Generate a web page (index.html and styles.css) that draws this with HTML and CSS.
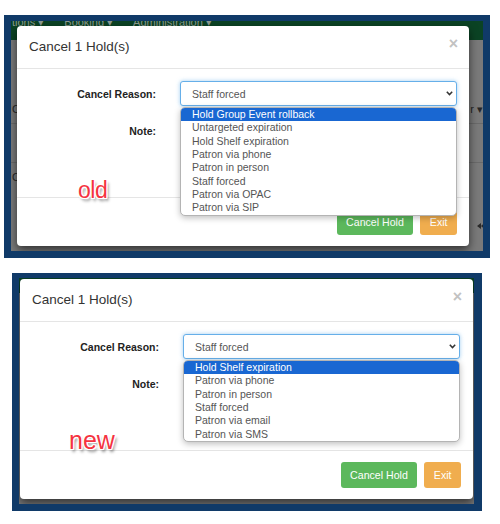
FILE: index.html
```html
<!DOCTYPE html>
<html lang="en">
<head>
<meta charset="utf-8">
<title>Cancel Hold – old vs new</title>
<link rel="stylesheet" href="styles.css">
</head>
<body>
  <div class="shot shot-old">
    <div class="screen">
      <div class="page">
        <div class="nav"><span>tions ▾</span><span>Booking ▾</span><span>Administration ▾</span></div>
        <div class="pg-row row1"><span>C</span><span>r ▾</span></div>
        <div class="pg-row row2"></div>
        <div class="pg-row row3"><span>C</span></div>
        <div class="pg-row row4">
          <svg class="pg-arrow" width="7" height="6" viewBox="0 0 7 6"><path d="M0 3 L4 0 V6 Z M4 3 L7 0.5 V5.5 Z" fill="#2a2a2a"/></svg>
        </div>
      </div>
      <div class="modal">
        <div class="modal-header">
          <h4 class="modal-title">Cancel 1 Hold(s)</h4>
          <button class="close" aria-label="Close">×</button>
        </div>
        <div class="modal-body">
          <label class="lbl">Cancel Reason:</label>
          <div class="select-wrap">
            <div class="select"><span>Staff forced</span><svg class="chev" width="7" height="5" viewBox="0 0 7 5"><path d="M0.8 0.8 L3.5 3.6 L6.2 0.8" fill="none" stroke="#333" stroke-width="1.5"/></svg></div>
            <ul class="options">
              <li class="sel">Hold Group Event rollback</li>
              <li>Untargeted expiration</li>
              <li>Hold Shelf expiration</li>
              <li>Patron via phone</li>
              <li>Patron in person</li>
              <li>Staff forced</li>
              <li>Patron via OPAC</li>
              <li>Patron via SIP</li>
            </ul>
          </div>
          <label class="lbl note-lbl">Note:</label>
          <div class="note-area"></div>
        </div>
        <div class="modal-footer">
          <button class="btn btn-success">Cancel Hold</button>
          <button class="btn btn-warning">Exit</button>
        </div>
      </div>
      <div class="tag tag-old">old</div>
    </div>
  </div>

  <div class="shot shot-new">
    <div class="screen">
      <div class="page">
        <div class="nav nav-new"></div>
      </div>
      <div class="modal">
        <div class="modal-header">
          <h4 class="modal-title">Cancel 1 Hold(s)</h4>
          <button class="close" aria-label="Close">×</button>
        </div>
        <div class="modal-body">
          <label class="lbl">Cancel Reason:</label>
          <div class="select-wrap">
            <div class="select"><span>Staff forced</span><svg class="chev" width="7" height="5" viewBox="0 0 7 5"><path d="M0.8 0.8 L3.5 3.6 L6.2 0.8" fill="none" stroke="#333" stroke-width="1.5"/></svg></div>
            <ul class="options">
              <li class="sel">Hold Shelf expiration</li>
              <li>Patron via phone</li>
              <li>Patron in person</li>
              <li>Staff forced</li>
              <li>Patron via email</li>
              <li>Patron via SMS</li>
            </ul>
          </div>
          <label class="lbl note-lbl">Note:</label>
          <div class="note-area"></div>
        </div>
        <div class="modal-footer">
          <button class="btn btn-success">Cancel Hold</button>
          <button class="btn btn-warning">Exit</button>
        </div>
      </div>
      <div class="tag tag-new">new</div>
    </div>
  </div>
</body>
</html>
```
FILE: styles.css
```css
* { box-sizing: border-box; }

body {
  margin: 0;
  background: #fff;
  font-family: "Liberation Sans", Arial, sans-serif;
}

.shot {
  border-style: solid;
  border-color: #103a68;
}
.shot-old {
  margin: 15px 0 0 4px;
  width: 486px;
  height: 243px;
  border-width: 6px 7px 7px 7px;
}
.shot-new {
  margin: 15px 0 0 12px;
  width: 470px;
  height: 238px;
  border-width: 5px 8px 7px 7px;
}

.screen {
  position: relative;
  height: 100%;
  overflow: hidden;
  background: #7a7a7a;
}

/* dimmed page under the backdrop */
.nav {
  height: 19px;
  background: #0b4324;
  display: flex;
  gap: 20px;
  padding-left: 1px;
  overflow: hidden;
  color: #8d9b92;
  font-size: 11px;
  line-height: 11px;
}
.nav span { margin-top: -4px; white-space: nowrap; }
.nav-new { height: 15px; }

.pg-row {
  display: flex;
  justify-content: space-between;
  color: #262626;
  font-size: 11px;
  line-height: 12px;
  padding-left: 1px;
}
.row1 {
  margin-top: 57px;
  height: 27px;
  padding-top: 6px;
  border-bottom: 1px solid #6a6a6a;
}
.row2 {
  height: 39px;
  border-bottom: 1px solid #6a6a6a;
}
.row3 {
  height: 60px;
  padding-top: 8px;
}
.row4 {
  justify-content: flex-end;
  padding-right: 0;
  height: 10px;
}
.pg-arrow { margin-right: -1px; }

/* modal */
.modal {
  position: absolute;
  height: 220px;
  background: #fff;
  border-radius: 4px;
  box-shadow: 0 4px 10px rgba(0, 0, 0, 0.6);
  display: flex;
  flex-direction: column;
}
.shot-old .modal { left: 6px; top: 5px; width: 452px; }
.shot-new .modal { left: 1px; top: 1px; width: 453px; }

.modal-header {
  height: 43px;
  flex: none;
  border-bottom: 1px solid #e5e5e5;
  display: flex;
  align-items: center;
  justify-content: space-between;
  padding: 0 11px 0 12px;
}
.modal-title {
  margin: 0;
  font-size: 13.5px;
  font-weight: normal;
  line-height: 16px;
  color: #333;
}
.close {
  align-self: flex-start;
  margin-top: 10px;
  border: 0;
  background: none;
  padding: 0;
  font: bold 16px/16px "Liberation Sans", Arial, sans-serif;
  color: #c2c2c2;
}

.modal-body {
  height: 128px;
  flex: none;
  display: grid;
  grid-template-columns: 139px 277px;
  column-gap: 24px;
  row-gap: 19px;
  align-content: start;
  padding-top: 12px;
}
.lbl {
  font-weight: bold;
  font-size: 10.5px;
  line-height: 12px;
  color: #222;
  text-align: right;
  align-self: center;
}
.note-lbl { align-self: start; }

.select-wrap { position: relative; }
.select {
  height: 25px;
  border: 1px solid #66afe9;
  border-radius: 3px;
  box-shadow: 0 0 4px rgba(102, 175, 233, 0.6);
  background: #fff;
  display: flex;
  align-items: center;
  justify-content: space-between;
  padding: 0 3px 0 11px;
  font-size: 10.5px;
  color: #555;
}
.options {
  position: absolute;
  z-index: 2;
  left: 0;
  top: 26px;
  width: 277px;
  margin: 0;
  padding: 0;
  list-style: none;
  background: #fff;
  border: 1px solid #b4b4b4;
  border-radius: 5px;
  box-shadow: 0 2px 6px rgba(0, 0, 0, 0.25);
  overflow: hidden;
}
.options li {
  height: 13.33px;
  line-height: 13.33px;
  padding-left: 11px;
  font-size: 10.5px;
  color: #555;
  white-space: nowrap;
}
.options li.sel {
  background: #1967d2;
  color: #fff;
}
.note-area { height: 56px; }

.modal-footer {
  height: 49px;
  flex: none;
  border-top: 1px solid #e5e5e5;
  display: flex;
  justify-content: flex-end;
  align-items: flex-start;
  gap: 7px;
  padding: 11px 12px 0 0;
}
.btn {
  height: 26px;
  padding: 0 9.5px;
  border: 0;
  border-radius: 3px;
  color: #fff;
  font: 10.6px/26px "Liberation Sans", Arial, sans-serif;
}
.btn-success { background: #5cb85c; }
.btn-warning { background: #f0ad4e; }

/* annotation labels */
.tag {
  position: absolute;
  z-index: 3;
  color: #f5333f;
  text-shadow:
    1px 0 0 #fff, -1px 0 0 #fff, 0 1px 0 #fff, 0 -1px 0 #fff,
    1px 1px 0 #fff, -1px -1px 0 #fff, 1px -1px 0 #fff, -1px 1px 0 #fff,
    2px 3px 3px rgba(0, 0, 0, 0.45);
}
.tag-old {
  left: 67px;
  top: 158px;
  font-size: 23px;
  line-height: 23px;
  letter-spacing: -0.5px;
}
.tag-new {
  left: 50px;
  top: 150px;
  font-size: 25px;
  line-height: 25px;
}
```
